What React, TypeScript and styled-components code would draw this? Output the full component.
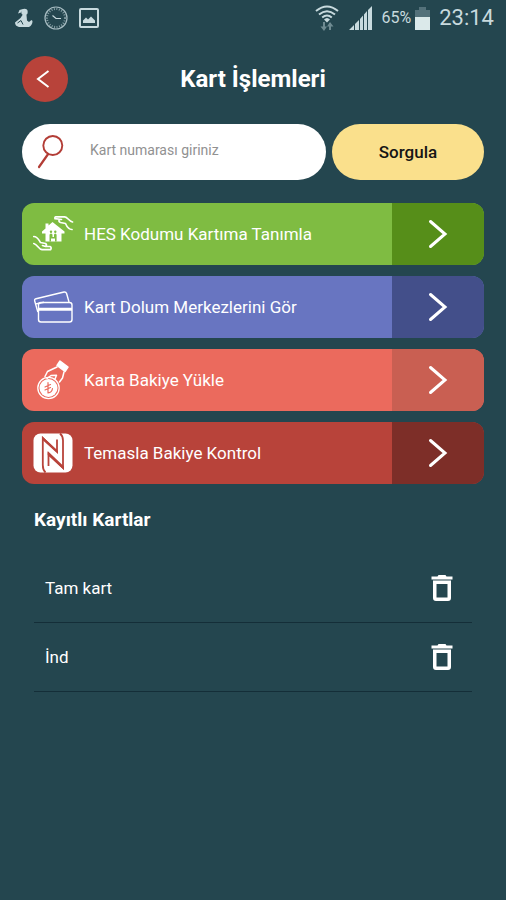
import React from "react";
import styled, { createGlobalStyle } from "styled-components";

const GlobalStyle = createGlobalStyle`
  *, *::before, *::after { box-sizing: border-box; }
  html, body { margin: 0; background: #24464f; }
  body, button, input { font-family: Roboto, "Noto Sans", sans-serif; }
  svg { display: block; flex: none; overflow: visible; }
`;

const Screen = styled.div`
  min-height: 100vh;
  background: #24464f;
  color: #ffffff;
`;

const StatusBar = styled.div`
  display: flex;
  align-items: center;
  justify-content: space-between;
  height: 36px;
  padding: 0 12px 0 15px;
  color: #c8dade;
`;

const StatusGroup = styled.div<{ $gap: number }>`
  display: flex;
  align-items: center;
  gap: ${(p) => p.$gap}px;
`;

const SignalSlot = styled.span`
  margin: 0 2px 0 6px;
`;

const Percent = styled.span`
  margin-left: 4px;
  font-size: 16px;
  line-height: 20px;
`;

const Clock = styled.time`
  margin-left: 5px;
  font-size: 22px;
  line-height: 28px;
`;

const Content = styled.main`
  padding: 20px 22px;
`;

const Header = styled.header`
  display: grid;
  grid-template-columns: 46px 1fr 46px;
  align-items: center;
  margin-bottom: 22px;
`;

const BackButton = styled.button`
  display: grid;
  place-items: center;
  width: 46px;
  height: 46px;
  padding: 0 4px 0 0;
  border: 0;
  border-radius: 50%;
  background: #b8433a;
  color: #ffffff;
`;

const Title = styled.h1`
  margin: 0;
  font-size: 24px;
  line-height: 28px;
  font-weight: 700;
  text-align: center;
`;

const SearchForm = styled.form`
  display: grid;
  grid-template-columns: 2fr 1fr;
  gap: 6px;
  margin-bottom: 23px;
`;

const SearchField = styled.label`
  display: flex;
  align-items: center;
  gap: 26px;
  height: 56px;
  padding: 0 20px 0 14px;
  border-radius: 28px;
  background: #ffffff;
`;

const SearchInput = styled.input`
  flex: 1;
  min-width: 0;
  padding: 0 0 4px;
  border: 0;
  outline: 0;
  background: transparent;
  color: #333333;
  font-size: 14px;
  line-height: 20px;
  &::placeholder { color: #919191; opacity: 1; }
`;

const QueryButton = styled.button`
  border: 0;
  border-radius: 28px;
  background: #fae08c;
  color: #151515;
  font-size: 17px;
  font-weight: 500;
`;

const ActionList = styled.div`
  display: grid;
  gap: 11px;
`;

const ActionButton = styled.button<{ $color: string }>`
  display: grid;
  grid-template-columns: 4fr 1fr;
  height: 62px;
  padding: 0;
  border: 0;
  border-radius: 12px;
  overflow: hidden;
  background: ${(p) => p.$color};
  color: #ffffff;
  font-size: 17px;
  text-align: left;
`;

const ActionLabel = styled.span`
  display: flex;
  align-items: center;
  gap: 11px;
  padding-left: 11px;
`;

const ActionArrow = styled.span<{ $color: string }>`
  display: grid;
  place-items: center;
  background: ${(p) => p.$color};
`;

const SavedSection = styled.section`
  padding: 24px 12px 0;
`;

const SectionTitle = styled.h2`
  margin: 0 0 22px;
  font-size: 19px;
  line-height: 24px;
  font-weight: 700;
`;

const SavedList = styled.ul`
  margin: 0;
  padding: 0;
  list-style: none;
`;

const SavedItem = styled.li`
  display: flex;
  align-items: center;
  justify-content: space-between;
  height: 69px;
  padding: 0 14px 0 11px;
  border-bottom: 1px solid #142e38;
  font-size: 17px;
`;

const DeleteButton = styled.button`
  display: grid;
  place-items: center;
  width: 32px;
  height: 32px;
  padding: 0;
  border: 0;
  background: transparent;
  color: #ffffff;
`;

const HomeIcon = () => (
  <svg width="40" height="40" viewBox="0 0 40 40" fill="none" stroke="#fff" strokeWidth="1.7" strokeLinecap="round" strokeLinejoin="round" aria-hidden="true">
    <path fill="#fff" stroke="none" d="M19.5 8 31.500 17.500V19.500H28.500V27.500H12.500V19.500H9V17.500L12.500 14.500V9.500H15.500V11.500Z" />
    <path fill="#7fbc42" stroke="none" d="M16.500 27.500V21Q16.500 19.500 18 19.500T19.500 21V23H21V21Q21 19.500 22.300 19.500T23.600 21V27.500H22V24.500H18V27.500Z" />
    <circle cx="18" cy="17.700" r="1.200" fill="#7fbc42" stroke="none" />
    <circle cx="22.300" cy="17.700" r="1.200" fill="#7fbc42" stroke="none" />
    <path d="M39.500 8C35.500 7 34.500 2.800 31.500 2.800H23Q21.500 3 22 4.700L28.500 5.500M26.500 5.500Q25 7.500 27.500 8.500L32.500 9.500C34 13 35.500 15.500 39 15.500" />
    <path d="M.8 22.500C4.500 22.500 5.500 25.500 7.500 28.500L12.500 29.500Q14.500 31 12.500 32.500L9.500 31.500M12.500 32.500H17Q19 33.500 17.500 35.700H9C5.500 35 4.500 30.500.8 29.500" />
  </svg>
);

const CardsIcon = () => (
  <svg width="40" height="40" viewBox="0 0 40 40" fill="none" stroke="#fff" strokeWidth="1.4" strokeLinejoin="round" aria-hidden="true">
    <path d="M5.500 25 4.700 24.500 1.700 14Q1.300 12.200 3 11.700L31 5Q33 4.700 33.600 6.500L36 15M2.500 17 11 15.300" />
    <rect x="5.500" y="15.500" width="33.500" height="19.500" rx="2.500" />
    <path d="M5.500 22.200H39" strokeWidth="3" />
  </svg>
);

const CoinIcon = () => (
  <svg width="40" height="40" viewBox="0 0 40 40" fill="none" stroke="#fff" strokeWidth="1.500" strokeLinecap="round" strokeLinejoin="round" aria-hidden="true">
    <path fill="#fff" d="M27 1 35 7 32 11.500 24 5.500Z" />
    <path d="M24 7 14.500 11.500 12 16.500M31 12 29.500 18 26.500 22M14 18.500 18 15.500 23.500 15.200 22 19" />
    <circle cx="15.500" cy="28" r="10.700" strokeWidth="1.300" />
    <circle cx="15.500" cy="28" r="9" fill="#fff" stroke="none" />
    <path stroke="#eb6a5d" strokeWidth="1.200" d="M15 22.500V33Q19 32.500 19.500 28.500M12 27 17.500 24.500M12 30 17.500 27.500" />
  </svg>
);

const NfcIcon = () => (
  <svg width="40" height="40" viewBox="0 0 40 40" fill="none" aria-hidden="true">
    <rect x=".5" y=".5" width="39" height="39" rx="7" fill="#fff" />
    <path stroke="#b8433a" strokeWidth="1.800" d="M12.500 39.500Q9.800 37 9.800 32V5L24 18.500V6.500M27 .5Q30 3 30 7.500V35L15.500 21V33" />
    <path fill="#b8433a" d="M9 3 25 18V21L9 6.500ZM14.700 18 31 33.500V37L14.700 22Z" />
  </svg>
);

const SearchIcon = () => (
  <svg width="28" height="36" viewBox="0 0 28 36" fill="none" stroke="#b33d36" strokeLinecap="round" aria-hidden="true">
    <circle cx="16.800" cy="11.500" r="9.500" strokeWidth="1.900" />
    <path d="M11.800 20.500 3 33" strokeWidth="2.200" />
  </svg>
);

const TrashIcon = () => (
  <svg width="22" height="28" viewBox="0 0 22 28" fill="none" stroke="currentColor" aria-hidden="true">
    <path fill="currentColor" stroke="none" d="M.5 2.500H6.500L7.500 1H14.500L15.500 2.500H21.500V5.500H.5Z" />
    <path fill="currentColor" stroke="none" fillRule="evenodd" d="M2 6.500H20V24Q20 27 17 27H5Q2 27 2 24ZM5.500 10V23.500H16.500V10Z" />
  </svg>
);

const NotificationIcons = () => (
  <>
    <svg width="18" height="21" viewBox="0 0 18 21" fill="#c8dade" aria-hidden="true">
      <circle cx="9.500" cy="4" r="3.200" />
      <path d="M8 1 4.500 2 3 5.500 6 4.500ZM7.500 7H11.500L12 12.500 14 14 16.500 12 17.500 13Q17.500 17 14 19H4Q0 18 0 14.500L5.500 10Z" />
      <path d="M2.500 15 6 12.500 8 16.500" fill="none" stroke="#24464f" />
    </svg>
    <svg width="24" height="24" viewBox="0 0 24 24" fill="none" stroke="#c8dade" aria-hidden="true">
      <circle cx="12" cy="12" r="11" strokeWidth="1.200" opacity=".8" />
      <circle cx="12" cy="12" r="9" strokeWidth="2" strokeDasharray="1 1.500" opacity=".6" />
      <path d="M8.500 9.500 12 12.500H17" strokeWidth="1.200" />
    </svg>
    <svg width="20" height="20" viewBox="0 0 20 20" fill="none" stroke="#c8dade" aria-hidden="true">
      <rect x="1" y="1" width="18" height="18" rx="1" strokeWidth="2" />
      <path fill="#c8dade" stroke="none" d="M4 15V12.500L7 9.500 9 11.500 12 8.500 16 12.500V15Z" />
    </svg>
  </>
);

const WifiIcon = () => (
  <svg width="24" height="26" viewBox="0 0 24 26" fill="none" stroke="#c8dade" strokeWidth="2" aria-hidden="true">
    <path d="M1 6Q12-3 23 6M4 9.500Q12 3 20 9.500M7.200 12.500Q12 8.500 16.800 12.500" />
    <path fill="#c8dade" stroke="none" d="M9 14.500Q12 11.500 15 14.500L12 17.500Z" />
    <path stroke="#6f8b92" d="M9 17V24M15 25V18" />
    <path fill="#6f8b92" stroke="none" d="M5.500 21.500H12L9 26ZM12 21.500H18.500L15 17Z" />
  </svg>
);

const SignalIcon = () => (
  <svg width="23" height="24" viewBox="0 0 23 24" fill="#c8dade" aria-hidden="true">
    <path d="M0 24 5 19V24ZM6 18 10 14V24H6ZM11 13 14 9.500V24H11ZM15 8.500 18 5V24H15ZM19 4 23 0V24H19Z" />
  </svg>
);

const BatteryIcon = () => (
  <svg width="15" height="23" viewBox="0 0 15 23" aria-hidden="true">
    <path fill="#54717a" d="M0 3H4V0H11V3H15V10H0Z" />
    <path fill="#dbe9ea" d="M0 10H15V23H0Z" />
  </svg>
);

const actions = [
  { label: "HES Kodumu Kartıma Tanımla", color: "#7fbc42", side: "#568e19", Icon: HomeIcon },
  { label: "Kart Dolum Merkezlerini Gör", color: "#6875c1", side: "#434f8a", Icon: CardsIcon },
  { label: "Karta Bakiye Yükle", color: "#eb6a5d", side: "#c95f52", Icon: CoinIcon },
  { label: "Temasla Bakiye Kontrol", color: "#b8433a", side: "#7d2e28", Icon: NfcIcon },
];

const savedCards = ["Tam kart", "İnd"];

export default function App() {
  return (
    <Screen lang="tr">
      <GlobalStyle />
      <StatusBar>
        <StatusGroup $gap={11}>
          <NotificationIcons />
        </StatusGroup>
        <StatusGroup $gap={4}>
          <WifiIcon />
          <SignalSlot>
            <SignalIcon />
          </SignalSlot>
          <Percent>65%</Percent>
          <BatteryIcon />
          <Clock>23:14</Clock>
        </StatusGroup>
      </StatusBar>
      <Content>
        <Header>
          <BackButton type="button" aria-label="Geri">
            <svg width="14" height="18" viewBox="0 0 14 18" fill="none" stroke="currentColor" strokeWidth="2" aria-hidden="true">
              <path d="M12.500 1 2 9 12.500 17" />
            </svg>
          </BackButton>
          <Title>Kart İşlemleri</Title>
        </Header>
        <SearchForm onSubmit={(e) => e.preventDefault()}>
          <SearchField>
            <SearchIcon />
            <SearchInput type="text" inputMode="numeric" aria-label="Kart numarası" placeholder="Kart numarası giriniz" />
          </SearchField>
          <QueryButton type="submit">Sorgula</QueryButton>
        </SearchForm>
        <ActionList>
          {actions.map(({ label, color, side, Icon }) => (
            <ActionButton key={label} type="button" $color={color}>
              <ActionLabel>
                <Icon />
                {label}
              </ActionLabel>
              <ActionArrow $color={side}>
                <svg width="20" height="30" viewBox="0 0 20 30" fill="none" stroke="#fff" strokeWidth="3" strokeLinecap="round" aria-hidden="true">
                  <path d="M2.500 2.500 17 15 2.500 27.500" />
                </svg>
              </ActionArrow>
            </ActionButton>
          ))}
        </ActionList>
        <SavedSection>
          <SectionTitle>Kayıtlı Kartlar</SectionTitle>
          <SavedList>
            {savedCards.map((name) => (
              <SavedItem key={name}>
                {name}
                <DeleteButton type="button" aria-label={`${name} sil`}>
                  <TrashIcon />
                </DeleteButton>
              </SavedItem>
            ))}
          </SavedList>
        </SavedSection>
      </Content>
    </Screen>
  );
}
